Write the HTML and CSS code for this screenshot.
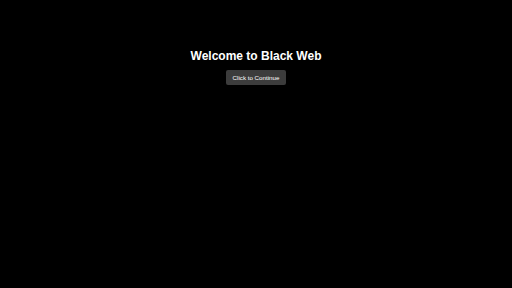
FILE: index.html
```html
<!DOCTYPE html>
<html lang="en">
<head>
    <meta charset="UTF-8">
    <meta name="viewport" content="width=device-width, initial-scale=1.0">
    <title>Black Web</title>
    <link rel="stylesheet" href="styles.css">
</head>
<body>
    <div class="welcome">
        <h1>Welcome to Black Web</h1>
        <button class="btn">Click to Continue</button>
    </div>
</body>
</html>
```

FILE: styles.css
```css
* {
    box-sizing: border-box;
}

body {
    margin: 0;
    background-color: #000;
    color: #fff;
    font-family: "Liberation Sans", Arial, sans-serif;
}

.welcome {
    display: flex;
    flex-direction: column;
    align-items: center;
    padding-top: 49px;
}

h1 {
    margin: 0;
    font-size: 12px;
    font-weight: bold;
    line-height: 14px;
}

.btn {
    margin-top: 7px;
    padding: 0 7px;
    height: 15px;
    border: none;
    border-radius: 2px;
    background-color: #3c3c3c;
    color: #fff;
    font-family: "Liberation Sans", Arial, sans-serif;
    font-size: 6.2px;
    cursor: pointer;
}
```
